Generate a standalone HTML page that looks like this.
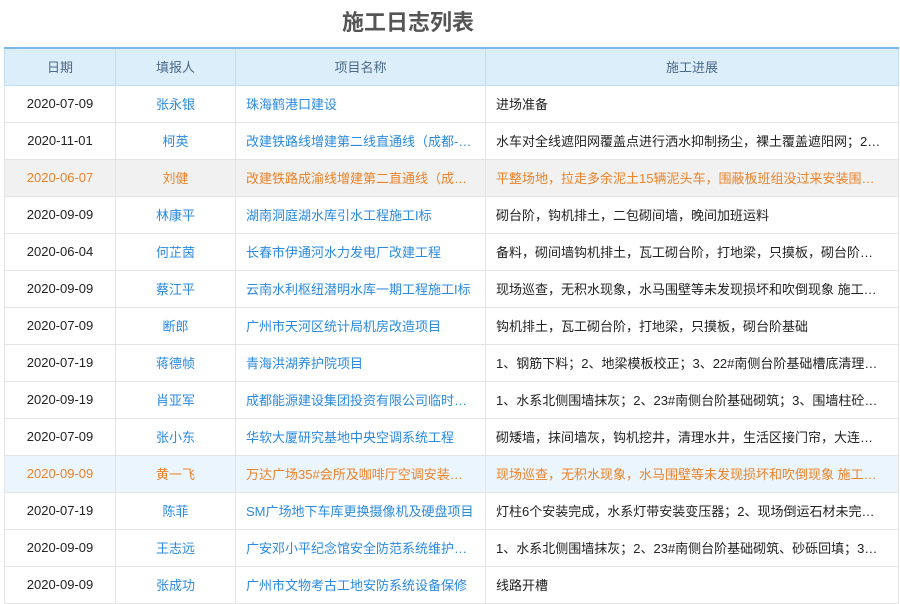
<!DOCTYPE html>
<html><head><meta charset="utf-8"><style>
body{margin:0;width:900px;height:600px;overflow:hidden;background:#fff;font-family:"Liberation Sans","Noto Sans CJK SC",sans-serif;}
h1{position:absolute;top:0;left:0;width:816px;margin:0;text-align:center;font-size:22px;line-height:46px;color:#555;font-weight:bold;}
table{position:absolute;left:4px;top:47px;border-collapse:collapse;table-layout:fixed;width:894px;font-size:13px;}
th{height:37px;box-sizing:border-box;background:#ddeefb;color:#4a6a8a;font-weight:normal;border:1px solid #c5ddf0;border-top:2px solid #7ab8e8;}
td{height:37px;box-sizing:border-box;border:1px solid #e4e4e4;white-space:nowrap;overflow:hidden;text-overflow:ellipsis;color:#222;padding:0 10px;}
td.c{text-align:center;padding:0;}
td.b{color:#2a8ae0;}
td.w{padding-right:14px;}
tr.o td{color:#ec8228;background:#f1f1f1;}
tr.p td{color:#ec8228;background:#ebf5fe;}
</style></head><body>
<h1>施工日志列表</h1>
<table>
<colgroup><col style="width:111px"><col style="width:120px"><col style="width:250px"><col style="width:413px"></colgroup>
<tr><th>日期</th><th>填报人</th><th>项目名称</th><th>施工进展</th></tr>
<tr><td class="c">2020-07-09</td><td class="c b">张永银</td><td class="b">珠海鹤港口建设</td><td class="w">进场准备</td></tr>
<tr><td class="c">2020-11-01</td><td class="c b">柯英</td><td class="b">改建铁路线增建第二线直通线（成都-西安）</td><td class="w">水车对全线遮阳网覆盖点进行洒水抑制扬尘，裸土覆盖遮阳网；2020年</td></tr>
<tr class="o"><td class="c">2020-06-07</td><td class="c">刘健</td><td>改建铁路成渝线增建第二直通线（成都）</td><td class="w">平整场地，拉走多余泥土15辆泥头车，围蔽板班组没过来安装围蔽板，明天</td></tr>
<tr><td class="c">2020-09-09</td><td class="c b">林康平</td><td class="b">湖南洞庭湖水库引水工程施工I标</td><td class="w">砌台阶，钩机排土，二包砌间墙，晚间加班运料</td></tr>
<tr><td class="c">2020-06-04</td><td class="c b">何芷茵</td><td class="b">长春市伊通河水力发电厂改建工程</td><td class="w">备料，砌间墙钩机排土，瓦工砌台阶，打地梁，只摸板，砌台阶基础施工</td></tr>
<tr><td class="c">2020-09-09</td><td class="c b">蔡江平</td><td class="b">云南水利枢纽潜明水库一期工程施工I标</td><td class="w">现场巡查，无积水现象，水马围壁等未发现损坏和吹倒现象 施工正常</td></tr>
<tr><td class="c">2020-07-09</td><td class="c b">断郎</td><td class="b">广州市天河区统计局机房改造项目</td><td class="w">钩机排土，瓦工砌台阶，打地梁，只摸板，砌台阶基础</td></tr>
<tr><td class="c">2020-07-19</td><td class="c b">蒋德帧</td><td class="b">青海洪湖养护院项目</td><td class="w">1、钢筋下料；2、地梁模板校正；3、22#南侧台阶基础槽底清理完成</td></tr>
<tr><td class="c">2020-09-19</td><td class="c b">肖亚军</td><td class="b">成都能源建设集团投资有限公司临时用电工程</td><td class="w">1、水系北侧围墙抹灰；2、23#南侧台阶基础砌筑；3、围墙柱砼浇筑完成</td></tr>
<tr><td class="c">2020-07-09</td><td class="c b">张小东</td><td class="b">华软大厦研究基地中央空调系统工程</td><td class="w">砌矮墙，抹间墙灰，钩机挖井，清理水井，生活区接门帘，大连瓦工进场</td></tr>
<tr class="p"><td class="c">2020-09-09</td><td class="c">黄一飞</td><td>万达广场35#会所及咖啡厅空调安装工程</td><td class="w">现场巡查，无积水现象，水马围壁等未发现损坏和吹倒现象 施工正常</td></tr>
<tr><td class="c">2020-07-19</td><td class="c b">陈菲</td><td class="b">SM广场地下车库更换摄像机及硬盘项目</td><td class="w">灯柱6个安装完成，水系灯带安装变压器；2、现场倒运石材未完成清理</td></tr>
<tr><td class="c">2020-09-09</td><td class="c b">王志远</td><td class="b">广安邓小平纪念馆安全防范系统维护工程</td><td class="w">1、水系北侧围墙抹灰；2、23#南侧台阶基础砌筑、砂砾回填；3、完成</td></tr>
<tr><td class="c">2020-09-09</td><td class="c b">张成功</td><td class="b">广州市文物考古工地安防系统设备保修</td><td class="w">线路开槽</td></tr>
</table>
</body></html>
